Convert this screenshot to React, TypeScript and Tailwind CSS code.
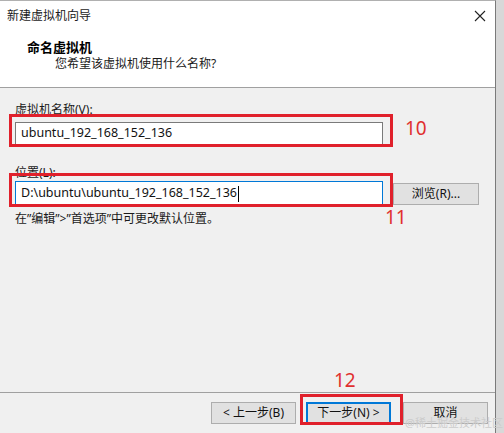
import React from "react";

const font = { fontFamily: '"Noto Sans", "Noto Sans CJK SC", sans-serif' };

function Btn({ children, focused }: { children: React.ReactNode; focused?: boolean }) {
  return (
    <div
      className={
        "w-[85px] h-[22px] flex items-center justify-center text-[12px] text-[#111] bg-[#e1e1e1] border " +
        (focused ? "border-[#0078d7] border-2" : "border-[#adadad]")
      }
    >
      {children}
    </div>
  );
}

export default function App() {
  return (
    <div className="w-[504px] h-[433px] bg-[#d8d8d8] overflow-hidden" style={font}>
      <div className="relative w-[496px] h-[433px] bg-[#f0f0f0] border-r border-[#7a7a7a] border-t border-t-[#b0b0b0] flex flex-col">
        {/* title bar */}
        <div className="h-[30px] bg-white flex items-center justify-between pl-[7px] pr-[8px]">
          <span className="text-[12px] text-[#1a1a1a]">新建虚拟机向导</span>
          <svg width="12" height="12" viewBox="0 0 12 12" className="mr-[1px]">
            <path d="M1 1 L11 11 M11 1 L1 11" stroke="#222" strokeWidth="1.1" />
          </svg>
        </div>
        {/* header */}
        <div className="h-[57px] bg-white border-b border-[#a0a0a0] pl-[27px] pt-[7px]">
          <div className="text-[13px] font-bold text-black leading-[18px]">命名虚拟机</div>
          <div className="text-[12px] text-[#1a1a1a] leading-[16px] pl-[28px]">您希望该虚拟机使用什么名称?</div>
        </div>
        {/* body */}
        <div className="relative h-[304px] px-[15px] pt-[14px]">
          <div className="text-[12px] text-[#1a1a1a] leading-[16px]">虚拟机名称(V):</div>
          <div className="relative mt-[4px] w-[368px]">
            <div className="h-[23px] bg-white border border-[#7a7a7a] flex items-center pl-[5px] text-[12.5px] text-[#111]">
              ubuntu_192_168_152_136
            </div>
            <div className="absolute left-[-6px] top-[-8px] w-[384px] h-[33px] border-[3px] border-[#e0202b]" />
            <div className="absolute left-[390px] top-[-6px] text-[19px] text-[#e0302f] leading-[24px]">10</div>
          </div>
          <div className="text-[12px] text-[#1a1a1a] leading-[16px] mt-[20px]">位置(L):</div>
          <div className="relative flex items-center">
            <div className="w-[368px] h-[25px] bg-white border border-[#0078d7] flex items-center pl-[5px] text-[12.5px] text-[#111]">
              D:\ubuntu\ubuntu_192_168_152_136
              <span className="inline-block w-px h-[16px] bg-black ml-[1px]" />
            </div>
            <div className="ml-[10px] w-[86px] h-[22px] bg-[#e1e1e1] border border-[#adadad] flex items-center justify-center text-[12px] text-[#111]">
              浏览(R)...
            </div>
            <div className="absolute left-[-6px] top-[-8px] w-[384px] h-[34px] border-[3px] border-[#e0202b]" />
            <div className="absolute left-[370px] top-[24px] text-[19px] text-[#e0302f] leading-[24px]">11</div>
          </div>
          <div className="text-[12px] text-[#1a1a1a] leading-[16px] mt-[5px]">在”编辑”&gt;”首选项”中可更改默认位置。</div>
          <div className="absolute left-[334px] top-[280px] text-[19px] text-[#e0302f] leading-[24px]">12</div>
        </div>
        {/* footer */}
        <div className="flex-1 border-t border-[#a0a0a0] flex justify-end pr-[7px] pt-[9px]">
          <Btn>&lt; 上一步(B)</Btn>
          <div className="relative ml-[10px]">
            <Btn focused>下一步(N) &gt;</Btn>
            <div className="absolute left-[-6px] top-[-8px] w-[103px] h-[31px] border-[3px] border-[#e0202b]" />
          </div>
          <div className="ml-[12px]">
            <Btn>取消</Btn>
          </div>
        </div>
        <div className="absolute left-[405px] bottom-[3px] text-[11px] leading-[14px] text-[#cccccc] whitespace-nowrap">@稀土掘金技术社区</div>
      </div>
    </div>
  );
}
